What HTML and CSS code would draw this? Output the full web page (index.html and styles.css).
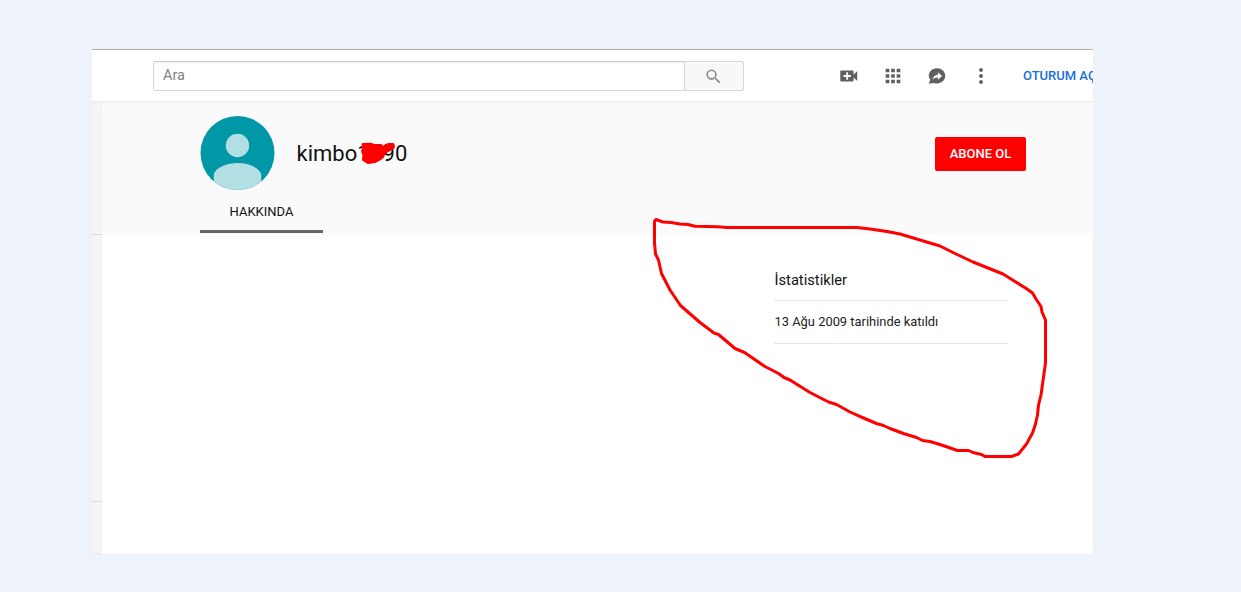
FILE: index.html
```html
<!DOCTYPE html>
<html lang="tr">
<head>
    <meta charset="UTF-8">
    <meta name="viewport" content="width=device-width, initial-scale=1.0">
    <title>Kanal - Hakkında</title>
    <link rel="stylesheet" href="styles.css">
</head>
<body>
    <div class="window">
        <header class="topbar">
            <form class="search">
                <input type="text" class="search-input" placeholder="Ara">
                <button type="button" class="search-btn" aria-label="Ara">
                    <svg width="19" height="19" viewBox="0 0 24 24"><path d="M15.5 14h-.79l-.28-.27A6.47 6.47 0 0 0 16 9.5 6.5 6.5 0 1 0 9.5 16c1.61 0 3.09-.59 4.23-1.57l.27.28v.79l5 4.99L20.49 19l-4.99-5zm-6 0a4.5 4.5 0 1 1 0-9 4.5 4.5 0 0 1 0 9z"/></svg>
                </button>
            </form>
            <nav class="actions">
                <svg width="22" height="22" viewBox="0 0 24 24"><path d="M17 10.500V7c0-.55-.45-1-1-1H3.500c-.55 0-1 .45-1 1v10c0 .55.45 1 1 1H16c.55 0 1-.45 1-1v-3.500l4 4v-11l-4 4zM14 13h-3v3H9v-3H6v-2h3V8h2v3h3v2z"/></svg>
                <svg width="22" height="22" viewBox="0 0 24 24"><path d="M4 8h4V4H4v4zm6 12h4v-4h-4v4zm-6 0h4v-4H4v4zm0-6h4v-4H4v4zm6 0h4v-4h-4v4zm6-10v4h4V4h-4zm-6 4h4V4h-4v4zm6 6h4v-4h-4v4zm0 6h4v-4h-4v4z"/></svg>
                <svg width="22" height="22" viewBox="0 0 24 24"><path fill-rule="evenodd" d="M12 3.500c5 0 9 3.700 9 8.300s-4 8.300-9 8.300c-1.200 0-2.300-.2-3.300-.6L3 20.500l1.600-4.300A7.800 7.800 0 0 1 3 11.800c0-4.600 4-8.300 9-8.300zM13 8v2.500c-3.500.4-5.300 2.500-6 5.500 1.500-1.800 3.300-2.500 6-2.500V16l4.500-4L13 8z"/></svg>
                <svg width="22" height="22" viewBox="0 0 24 24"><circle cx="12" cy="5.500" r="2.100"/><circle cx="12" cy="12" r="2.100"/><circle cx="12" cy="18.500" r="2.100"/></svg>
            </nav>
            <a class="signin">OTURUM AÇ</a>
        </header>

        <div class="content">
            <aside class="sidebar">
                <div class="side-block side-first"></div>
                <div class="side-block side-second"></div>
                <div class="side-block side-last"></div>
            </aside>
            <main class="channel">
                <section class="channel-header">
                    <div class="channel-info">
                        <svg class="avatar" width="75" height="74" viewBox="0 0 75 74">
                            <defs><clipPath id="round"><circle cx="37.500" cy="37" r="37"/></clipPath></defs>
                            <g clip-path="url(#round)">
                                <rect width="75" height="74" fill="#0097a7"/>
                                <circle cx="37.500" cy="29.500" r="11.700" fill="#b2dfe3"/>
                                <path d="M13.800 74V58c3-7 13-11 23.700-11s20.700 4 23.700 11v16z" fill="#b2dfe3"/>
                            </g>
                        </svg>
                        <h1 class="name">kimbo1<span class="name-gap"></span>90</h1>
                        <button type="button" class="subscribe">ABONE OL</button>
                    </div>
                    <div class="tab">HAKKINDA</div>
                </section>
                <section class="stats">
                    <h2 class="stats-title">İstatistikler</h2>
                    <p class="stats-row">13 Ağu 2009 tarihinde katıldı</p>
                </section>
            </main>
        </div>
    </div>

    <!-- red marker strokes over the page -->
    <svg class="marker" width="1241" height="592" viewBox="0 0 1241 592">
        <path d="M656 219.500L663 222L671 222.500L680 224L688 224.500L695 226.300L718 226.800L727 227.500H857L870 229L887 231.500L900 234L920 240L940 246L956 254L973 262L988 268L1003 274L1015 281.500L1027 289L1032.500 293L1036 299L1041 306.500L1042 312L1045.500 320V363L1043.500 377L1041 395L1038.500 405L1037.500 415L1035.500 424L1032.500 433L1026.500 444L1018.500 454L1011.500 456.500H985L981.500 454.500L973 452.500L968.500 450.500H957.500L940 444.500L930 441.500L922.500 440.500L916.500 437.500L903.500 433.500L890 428.500L883.500 425.500L876.500 423.500L863.500 418L850 412L836.500 404.500L828.500 402L810 392.500L790 380L784 377.500L778.500 373.500L765 366.500L744.500 352.500L735 348.500L718.500 334.500L714 333L700 322.500L680.500 305.500L670 290L661.500 273.500L658.500 260L655.500 254L654.500 243V221.500Z"/>
        <path class="blot" d="M363 144.500L371 144.300L374 145.500H381L383 148L386 145.500L389 144.500H393L393.500 147L390 149.500L384.500 152.500L382.500 157L378 160L375 161.500L368 162.500L363.500 159.500L364 155L362.500 151L364 148Z"/>
    </svg>
</body>
</html>
```
FILE: styles.css
```css
* { box-sizing: border-box; }
body { margin: 0; height: 592px; padding: 49px 0 0 92px; background: #edf2fb; font-family: Roboto, Arial, sans-serif; color: #111; overflow: hidden; }
.window { width: 1001px; height: 505px; background: #fff; border-top: 1px solid #b0b0b5; overflow: hidden; display: flex; flex-direction: column; }

.topbar { height: 51px; flex: none; display: flex; align-items: center; padding-left: 61px; white-space: nowrap; }
.search { display: flex; width: 591px; height: 30px; flex: none; margin-top: 1px; }
.search-input { width: 532px; border: 1px solid #d8d8d8; border-top-color: #ccc; border-radius: 2px 0 0 2px; box-shadow: inset 0 1px 2px #eee; padding: 0 9px 1px; font-family: inherit; font-size: 14.5px; }
.search-input::placeholder { color: #838383; }
.search-btn { width: 59px; border: 1px solid #d8d8d8; border-left: 0; border-radius: 0 2px 2px 0; background: #f8f8f8; padding: 0 2px 0 0; display: flex; align-items: center; justify-content: center; }
.search-btn svg { fill: #888; }
.actions { display: flex; gap: 22px; margin-left: 94px; fill: #606060; }
.actions svg { flex: none; }
.signin { margin-left: 31px; color: #1a6fd8; font-size: 13px; font-weight: 500; }

.content { display: flex; flex: 1; box-shadow: inset 0 2px 2px #f0f0f0; }
.sidebar { width: 10px; background: #f5f5f5; box-shadow: inset 0 2px 2px #eee; }
.side-block { border-bottom: 1px solid #dcdcdc; }
.side-first { height: 134px; }
.side-second { height: 267px; }
.side-last { height: 52px; border-color: #e8e8e8; }
.channel { flex: 1; }
.channel-header { height: 133px; background: #fafafa; box-shadow: inset 0 3px 2px -1px #f1f1f1; padding: 15px 67px 0 98px; }
.channel-info { display: flex; align-items: center; height: 74px; }
.name { margin: 0 0 0 21.500px; font-size: 22px; font-weight: 400; }
.name-gap { display: inline-block; width: 13px; }
.subscribe { margin: 1px 0 0 auto; width: 91px; height: 34px; padding: 0; border: 0; border-radius: 2px; background: #f00; color: #fff; font-family: inherit; font-size: 13px; font-weight: 500; }
.tab { width: 123px; height: 43px; line-height: 43px; border-bottom: 3px solid #666; text-align: center; font-size: 13px; }
.stats { width: 234px; margin: 36px 0 0 672px; }
.stats-title { margin: 0; height: 31px; line-height: 21px; font-size: 14.700px; font-weight: 400; border-bottom: 1px solid #e8e8e8; padding-left: 0.500px; }
.stats-row { margin: 0; height: 43px; line-height: 41px; font-size: 12.900px; color: #222; border-bottom: 1px solid #e8e8e8; padding-left: 0.500px; }

.marker { position: absolute; left: 0; top: 0; fill: none; stroke: #f00; stroke-width: 3; stroke-linejoin: round; pointer-events: none; }
.blot { fill: #f00; }
```
